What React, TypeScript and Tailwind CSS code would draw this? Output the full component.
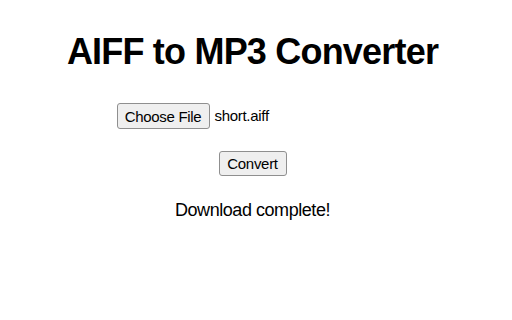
export default function App() {
  return (
    <div className="w-[512px] h-[320px] bg-white font-['Liberation_Sans',Arial,sans-serif] text-black">
      <div className="w-[505px] flex flex-col items-center">
        <h1 className="mt-[34px] text-[36px] leading-[36px] font-bold tracking-[-0.8px]">
          AIFF to MP3 Converter
        </h1>
        <div className="mt-[33px] w-[272px] flex items-center">
          <button className="w-[93px] h-[26px] bg-[#efefef] border border-[#8f8f8f] rounded-[3px] text-[15px] tracking-[-0.3px] leading-none">
            Choose File
          </button>
          <span className="ml-[5px] text-[15px] tracking-[-0.3px]">short.aiff</span>
        </div>
        <button className="mt-[22px] w-[68px] h-[25px] bg-[#efefef] border border-[#8f8f8f] rounded-[3px] text-[15px] tracking-[-0.3px] leading-none">
          Convert
        </button>
        <p className="mt-[25px] text-[18px] leading-[18px] tracking-[-0.45px]">Download complete!</p>
      </div>
    </div>
  );
}
